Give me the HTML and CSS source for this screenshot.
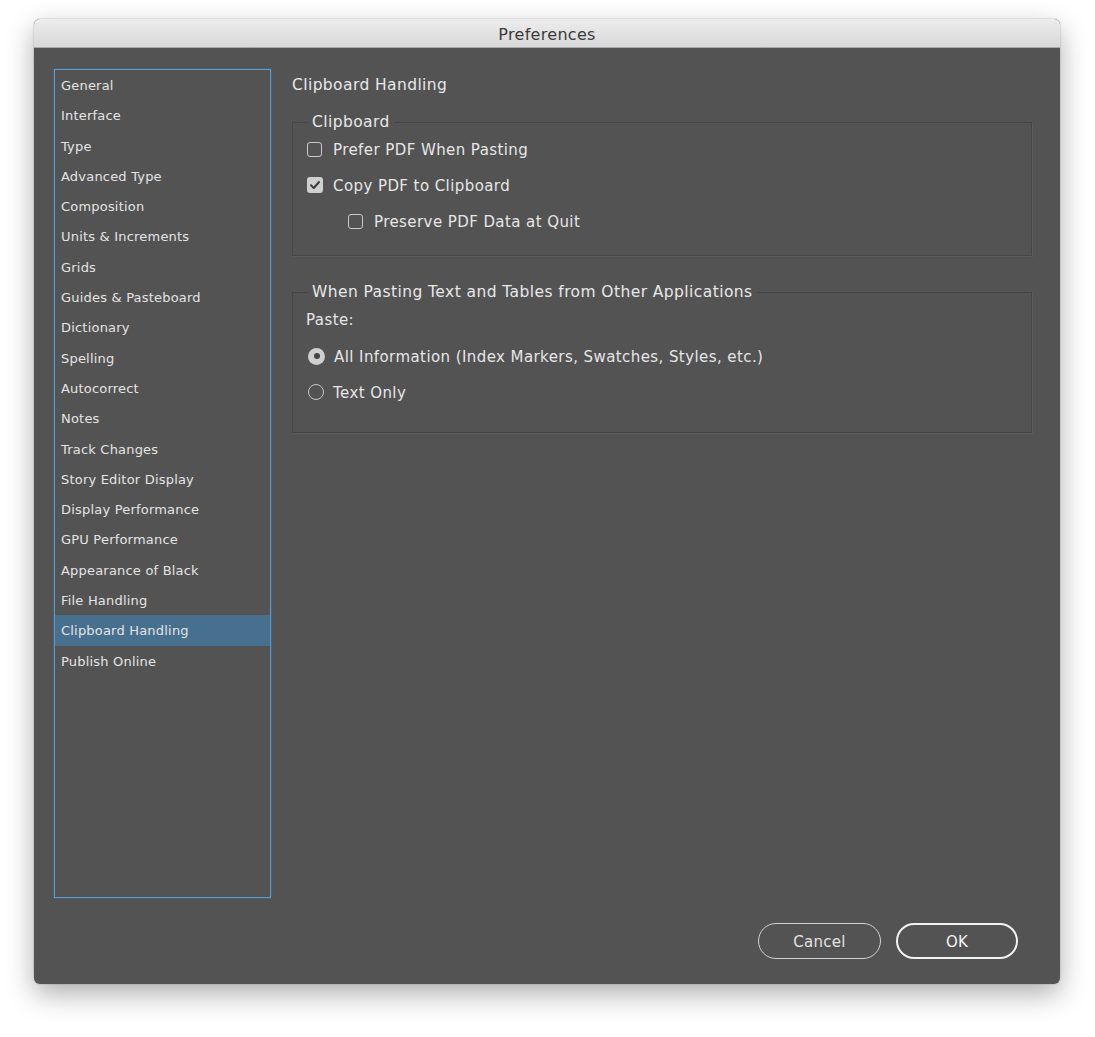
FILE: index.html
```html
<!DOCTYPE html>
<html lang="en">
<head>
    <meta charset="UTF-8">
    <title>Preferences</title>
    <link rel="stylesheet" href="styles.css">
</head>
<body>
    <div class="window">
        <div class="titlebar">Preferences</div>
        <div class="content">
            <ul class="sidebar">
                <li>General</li>
                <li>Interface</li>
                <li>Type</li>
                <li>Advanced Type</li>
                <li>Composition</li>
                <li>Units &amp; Increments</li>
                <li>Grids</li>
                <li>Guides &amp; Pasteboard</li>
                <li>Dictionary</li>
                <li>Spelling</li>
                <li>Autocorrect</li>
                <li>Notes</li>
                <li>Track Changes</li>
                <li>Story Editor Display</li>
                <li>Display Performance</li>
                <li>GPU Performance</li>
                <li>Appearance of Black</li>
                <li>File Handling</li>
                <li class="selected">Clipboard Handling</li>
                <li>Publish Online</li>
            </ul>
            <div class="panel">
                <h2 class="panel-title">Clipboard Handling</h2>

                <fieldset class="group">
                    <legend>Clipboard</legend>
                    <div class="row">
                        <span class="check"></span>
                        <span>Prefer PDF When Pasting</span>
                    </div>
                    <div class="row">
                        <span class="check checked">
                            <svg viewBox="0 0 16 16" width="16" height="16"><path d="M4 8.3 L6.8 11 L12 5" fill="none" stroke="#3c3c3c" stroke-width="2" stroke-linecap="round" stroke-linejoin="round"/></svg>
                        </span>
                        <span>Copy PDF to Clipboard</span>
                    </div>
                    <div class="row indent">
                        <span class="check"></span>
                        <span>Preserve PDF Data at Quit</span>
                    </div>
                </fieldset>

                <fieldset class="group group-paste">
                    <legend>When Pasting Text and Tables from Other Applications</legend>
                    <div class="paste-label">Paste:</div>
                    <div class="row">
                        <span class="radio on"></span>
                        <span>All Information (Index Markers, Swatches, Styles, etc.)</span>
                    </div>
                    <div class="row">
                        <span class="radio"></span>
                        <span>Text Only</span>
                    </div>
                </fieldset>
            </div>
        </div>
        <div class="footer">
            <button class="btn">Cancel</button>
            <button class="btn btn-ok">OK</button>
        </div>
    </div>
</body>
</html>
```

FILE: styles.css
```css
body {
    margin: 0;
    background: #ffffff;
    font-family: "DejaVu Sans", "Liberation Sans", sans-serif;
    width: 1095px;
    height: 1037px;
    overflow: hidden;
}

/* Dialog window */
.window {
    margin: 19px 0 0 34px;
    width: 1026px;
    height: 965px;
    background: #535353;
    border-radius: 6px;
    box-shadow: 0 10px 28px rgba(0, 0, 0, 0.32), 0 0 2px rgba(0, 0, 0, 0.25);
    display: flex;
    flex-direction: column;
    overflow: hidden;
}
.titlebar {
    height: 28px;
    line-height: 31px;
    text-align: center;
    font-size: 16px;
    letter-spacing: 0.3px;
    color: #3a3a3a;
    background: linear-gradient(#ededed 0%, #d8d8d8 100%);
    border-bottom: 1px solid #a9a9a9;
}

.content {
    display: flex;
    padding: 21px 28px 0 20px;
    gap: 21px;
}

/* Left list */
.sidebar {
    list-style: none;
    margin: 0;
    padding: 0;
    width: 215px;
    height: 827px;
    border: 1px solid #5f9bc8;
    box-shadow: 0 0 0 0.5px #3f6f94;
    flex-shrink: 0;
}
.sidebar li {
    height: 30.3px;
    line-height: 31.5px;
    padding-left: 6px;
    font-size: 13px;
    letter-spacing: 0.2px;
    color: #e4e4e4;
}
.sidebar li.selected {
    background: #47708f;
}

/* Right panel */
.panel {
    flex: 1;
    padding-top: 1px;
    color: #e6e6e6;
    font-size: 15px;
    letter-spacing: 0.42px;
}
.panel-title {
    margin: 0 0 13px 0;
    height: 30px;
    line-height: 30px;
    font-size: 15.5px;
    font-weight: normal;
    letter-spacing: 0.4px;
    color: #e8e8e8;
}

.group {
    margin: 0;
    padding: 0 13px 16px 13px;
    border: 1px solid #464646;
    box-shadow: 1px 1px 0 #5c5c5c;
    min-width: 0;
}
.group legend {
    padding: 0 4px;
    margin-left: 2px;
    line-height: 18px;
    font-size: 15.5px;
    color: #e8e8e8;
}
.group-paste {
    margin-top: 27px;
    padding-bottom: 22px;
}

.row {
    display: flex;
    align-items: center;
    height: 36px;
    padding-left: 1px;
    gap: 9px;
}
.row > span:last-child {
    padding-top: 2px;
}
.row.indent {
    padding-left: 42px;
}
.paste-label {
    height: 37px;
    line-height: 39px;
}

.check {
    width: 13px;
    height: 13px;
    border: 1.5px solid #c9c9c9;
    border-radius: 3px;
    flex-shrink: 0;
    margin-right: 2px;
}
.check.checked {
    width: 16px;
    height: 16px;
    border: none;
    background: #cfcfcf;
    margin-right: 1px;
}
.check svg {
    display: block;
}

.radio {
    width: 14px;
    height: 14px;
    border: 1.5px solid #c9c9c9;
    border-radius: 50%;
    flex-shrink: 0;
    position: relative;
    margin-left: 1px;
}
.radio.on {
    border: none;
    width: 17px;
    height: 17px;
    background: #cfcfcf;
}
.radio.on:after {
    content: '';
    position: absolute;
    left: 5.5px;
    top: 5.5px;
    width: 6px;
    height: 6px;
    border-radius: 50%;
    background: #444;
}

/* Buttons */
.footer {
    display: flex;
    justify-content: flex-end;
    gap: 15px;
    padding: 25px 42px 0 0;
}
.btn {
    width: 123px;
    height: 36px;
    border-radius: 18px;
    border: 1.5px solid #d2d2d2;
    background: transparent;
    color: #e2e2e2;
    font-family: "DejaVu Sans", "Liberation Sans", sans-serif;
    font-size: 15px;
    letter-spacing: 0.3px;
    padding-top: 2px;
}
.btn-ok {
    width: 122px;
    border: 2px solid #f2f2f2;
    color: #f4f4f4;
}
```
